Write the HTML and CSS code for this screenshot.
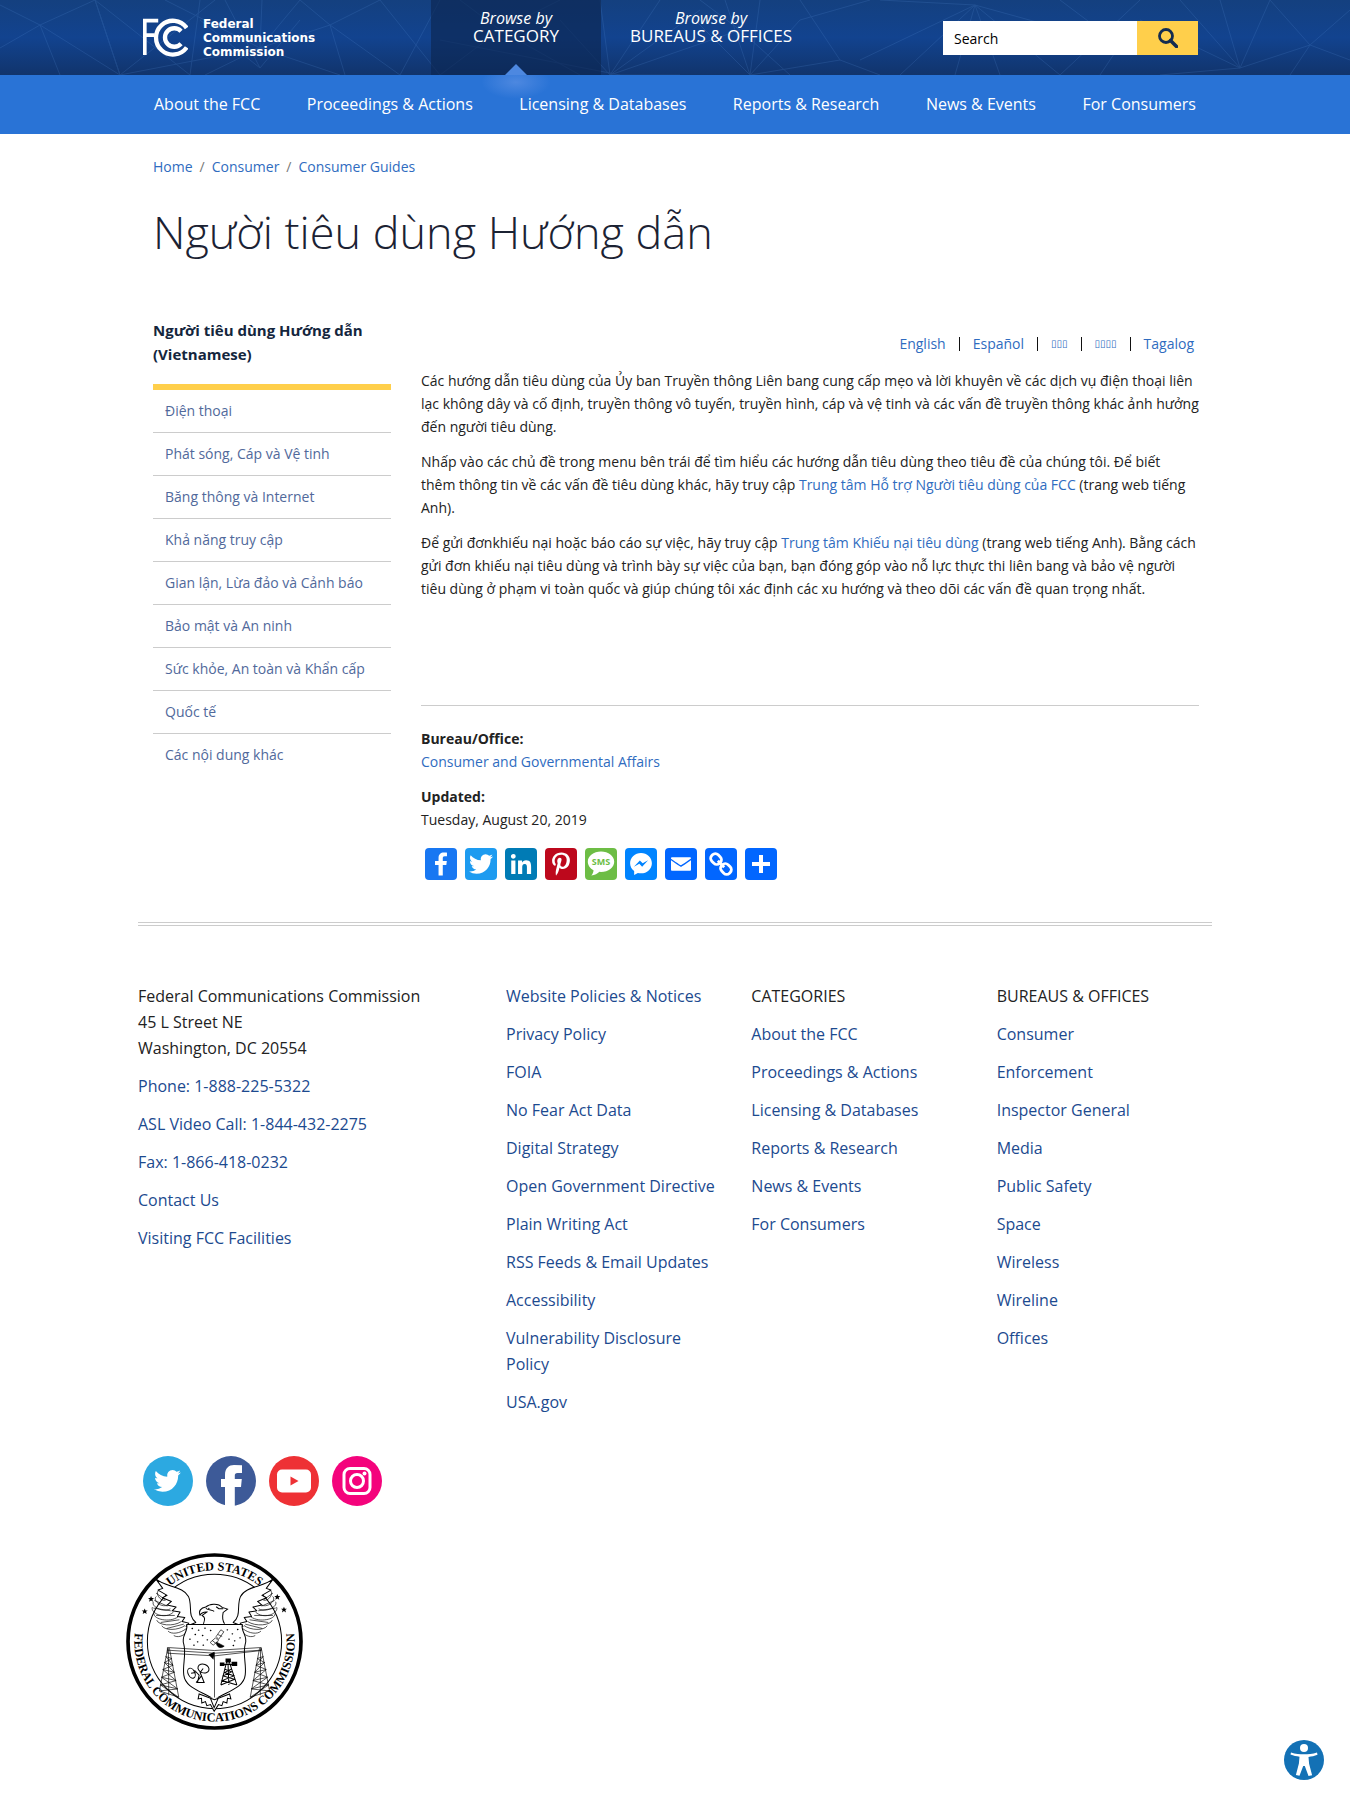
FILE: index.html
```html
<!DOCTYPE html>
<html lang="vi">
<head>
<meta charset="utf-8">
<meta name="viewport" content="width=device-width, initial-scale=1">
<title>Người tiêu dùng Hướng dẫn | Federal Communications Commission</title>
<link rel="stylesheet" href="styles.css">
</head>
<body>
<header class="site-header">
  <div class="masthead">
    <svg class="masthead-pattern" viewBox="0 0 1350 75" preserveAspectRatio="xMidYMid slice" aria-hidden="true">
      <g id="web" fill="none" stroke="#5b93dc" stroke-width="1">
        <path d="M0 5 40 25 95 0M0 48 40 25 60 75M40 25 120 75 95 0M120 75 95 0 190 75M120 75 215 0M120 75 260 48 340 75M190 75 200 0M260 48 165 0M260 48 262 0M260 48 300 0M260 48 330 25 400 75M260 48 205 75M330 25 300 0M330 25 380 0 440 75M330 25 345 75M260 68 200 20M260 68 225 0M260 68 300 20"/>
        <path d="M400 75 440 0M440 75 500 30 580 75M500 30 460 0M500 30 560 0M440 40 620 75M600 0 610 75 700 10M610 75 660 0M610 75 740 30M610 75 560 20M610 75 680 75M740 30 700 0M740 30 790 75"/>
      </g>
      <path fill="none" stroke="#5b93dc" d="M750 75 725 0M750 75 760 0M750 75 800 20 870 0M750 75 690 15M750 75 840 60 800 0M840 60 880 75M975 5 900 75M975 5 860 60M975 5 880 0M975 5 955 75M975 5 1000 75M975 5 1060 75M975 5 1120 45M1060 75 1140 0M1120 45 1060 0M1120 45 1100 75M1240 68 1180 0M1240 68 1140 20M1240 68 1220 0M1240 68 1270 0M1240 68 1310 45M1240 68 1160 75M1310 45 1270 0M1310 45 1350 10M1310 45 1350 60M1310 45 1290 75"/>
    </svg>
    <div class="masthead-inner">
      <a class="logo" href="#">
        <svg class="logo-mark" viewBox="38 56 136 116" aria-hidden="true">
          <path d="M43.500 167V63H84M46 107H73" fill="none" stroke="#fff" stroke-width="11"/>
          <path d="M170 85A51 51 0 1 0 170 144" fill="none" stroke="#fff" stroke-width="13"/>
          <path d="M153 95A28 28 0 1 0 153 133" fill="none" stroke="#fff" stroke-width="13"/>
        </svg>
        <span class="logo-text">Federal<br>Communications<br>Commission</span>
      </a>
      <nav class="tabs" aria-label="Browse">
        <a class="tab tab-category is-active" href="#"><em>Browse by</em><span>CATEGORY</span></a>
        <a class="tab tab-bureaus" href="#"><em>Browse by</em><span>BUREAUS &amp; OFFICES</span></a>
      </nav>
      <form class="search" role="search">
        <input type="text" value="Search" aria-label="Search">
        <button type="button" aria-label="Submit search">
          <svg viewBox="0 0 20 20" aria-hidden="true"><circle cx="8" cy="8" r="6.500" fill="none" stroke="#142c50" stroke-width="2.800"/><path d="m12.500 12.500 6 6" stroke="#142c50" stroke-width="3.600" stroke-linecap="round"/></svg>
        </button>
      </form>
    </div>
  </div>
  <nav class="main-nav" aria-label="Main">
    <ul>
      <li><a href="#">About the FCC</a></li>
      <li><a href="#">Proceedings &amp; Actions</a></li>
      <li><a href="#">Licensing &amp; Databases</a></li>
      <li><a href="#">Reports &amp; Research</a></li>
      <li><a href="#">News &amp; Events</a></li>
      <li><a href="#">For Consumers</a></li>
    </ul>
  </nav>
</header>

<div class="page">
  <ol class="breadcrumb">
    <li><a href="#">Home</a></li>
    <li><a href="#">Consumer</a></li>
    <li><a href="#">Consumer Guides</a></li>
  </ol>
  <h1>Người tiêu dùng Hướng dẫn</h1>
  <div class="columns">
    <aside class="sidebar">
      <h2>Người tiêu dùng Hướng dẫn (Vietnamese)</h2>
      <ul>
        <li><a href="#">Điện thoại</a></li>
        <li><a href="#">Phát sóng, Cáp và Vệ tinh</a></li>
        <li><a href="#">Băng thông và Internet</a></li>
        <li><a href="#">Khả năng truy cập</a></li>
        <li><a href="#">Gian lận, Lừa đảo và Cảnh báo</a></li>
        <li><a href="#">Bảo mật và An ninh</a></li>
        <li><a href="#">Sức khỏe, An toàn và Khẩn cấp</a></li>
        <li><a href="#">Quốc tế</a></li>
        <li><a href="#">Các nội dung khác</a></li>
      </ul>
    </aside>
    <main class="content">
      <ul class="languages">
        <li><a href="#">English</a></li>
        <li><a href="#">Español</a></li>
        <li><a class="boxed" href="#">▯▯▯</a></li>
        <li><a class="boxed" href="#">▯▯▯▯</a></li>
        <li><a href="#">Tagalog</a></li>
      </ul>
      <div class="body-text">
        <p>Các hướng dẫn tiêu dùng của Ủy ban Truyền thông Liên bang cung cấp mẹo và lời khuyên về các dịch vụ điện thoại liên lạc không dây và cố định, truyền thông vô tuyến, truyền hình, cáp và vệ tinh và các vấn đề truyền thông khác ảnh hưởng đến người tiêu dùng.</p>
        <p>Nhấp vào các chủ đề trong menu bên trái để tìm hiểu các hướng dẫn tiêu dùng theo tiêu đề của chúng tôi. Để biết<br>thêm thông tin về các vấn đề tiêu dùng khác, hãy truy cập <a href="#">Trung tâm Hỗ trợ Người tiêu dùng của FCC</a> (trang web tiếng Anh).</p>
        <p>Để gửi đơnkhiếu nại hoặc báo cáo sự việc, hãy truy cập <a href="#">Trung tâm Khiếu nại tiêu dùng</a> (trang web tiếng Anh). Bằng cách gửi đơn khiếu nại tiêu dùng và trình bày sự việc của bạn, bạn đóng góp vào nỗ lực thực thi liên bang và bảo vệ người tiêu dùng ở phạm vi toàn quốc và giúp chúng tôi xác định các xu hướng và theo dõi các vấn đề quan trọng nhất.</p>
      </div>
      <div class="meta">
        <p><strong>Bureau/Office:</strong><br><a href="#">Consumer and Governmental Affairs</a></p>
        <p><strong>Updated:</strong><br>Tuesday, August 20, 2019</p>
      </div>
      <div class="share">
        <a class="facebook" href="#" aria-label="Facebook"><svg viewBox="0 0 32 32"><path d="M17.780 27.500V17.008h3.522l.527-4.090h-4.050v-2.610c0-1.182.330-1.990 2.023-1.990h2.166V4.660c-.375-.050-1.660-.160-3.155-.160-3.123 0-5.260 1.905-5.260 5.405v3.016h-3.530v4.090h3.530V27.500z"/></svg></a>
        <a class="twitter" href="#" aria-label="Twitter"><svg viewBox="0 0 32 32"><path id="bird" d="M28 8.557a9.913 9.913 0 0 1-2.828.775 4.930 4.930 0 0 0 2.166-2.725 9.738 9.738 0 0 1-3.130 1.194 4.920 4.920 0 0 0-3.593-1.550 4.924 4.924 0 0 0-4.794 6.049c-4.090-.210-7.720-2.170-10.150-5.150a4.942 4.942 0 0 0-.665 2.477c0 1.710.870 3.214 2.190 4.100a4.968 4.968 0 0 1-2.230-.616v.060c0 2.390 1.700 4.380 3.952 4.830-.414.115-.850.174-1.297.174-.318 0-.626-.030-.928-.086a4.935 4.935 0 0 0 4.600 3.420 9.893 9.893 0 0 1-6.114 2.107c-.398 0-.790-.023-1.175-.068a13.953 13.953 0 0 0 7.550 2.213c9.056 0 14.010-7.507 14.010-14.013 0-.213-.005-.426-.015-.637.960-.695 1.795-1.560 2.455-2.550z"/></svg></a>
        <a class="linkedin" href="#" aria-label="LinkedIn"><svg viewBox="0 0 32 32"><path d="M6.227 12.610h4.190v13.480h-4.190V12.610zm2.095-6.700a2.430 2.430 0 0 1 0 4.860c-1.344 0-2.428-1.090-2.428-2.430s1.084-2.430 2.428-2.430m4.720 6.700h4.020v1.840h.058c.560-1.058 1.927-2.176 3.965-2.176 4.238 0 5.020 2.792 5.020 6.420v7.395h-4.183v-6.560c0-1.564-.030-3.574-2.178-3.574-2.180 0-2.514 1.700-2.514 3.460v6.668h-4.187V12.610z"/></svg></a>
        <a class="pinterest" href="#" aria-label="Pinterest"><svg viewBox="0 0 32 32"><path d="M16.539 4.500c-6.277 0-9.442 4.500-9.442 8.253 0 2.272.860 4.293 2.705 5.046.303.125.574.005.662-.330.061-.231.205-.816.270-1.060.088-.331.053-.447-.191-.736-.532-.627-.873-1.439-.873-2.591 0-3.338 2.498-6.327 6.505-6.327 3.548 0 5.497 2.168 5.497 5.062 0 3.810-1.686 7.025-4.188 7.025-1.382 0-2.416-1.142-2.085-2.545.397-1.674 1.166-3.480 1.166-4.689 0-1.081-.581-1.983-1.782-1.983-1.413 0-2.548 1.462-2.548 3.419 0 1.247.421 2.091.421 2.091l-1.699 7.199c-.505 2.137-.076 4.755-.039 5.019.021.158.223.196.314.077.130-.170 1.813-2.247 2.384-4.324.162-.587.929-3.631.929-3.631.460.876 1.801 1.646 3.227 1.646 4.247 0 7.128-3.871 7.128-9.053.003-3.918-3.317-7.568-8.361-7.568z"/></svg></a>
        <a class="sms" href="#" aria-label="SMS"><svg viewBox="0 0 32 32"><path d="M16 3.500C8.600 3.500 2.800 8 2.800 13.700c0 3.600 2.400 6.700 5.700 8.500 0 1.700-.600 3.500-2.200 5.300 3.500-.300 6.300-1.800 8.100-3.700l1.600.1c7.400 0 13.200-4.500 13.200-10.200S23.400 3.500 16 3.500z"/><text x="16" y="17" text-anchor="middle">SMS</text></svg></a>
        <a class="messenger" href="#" aria-label="Messenger"><svg viewBox="0 0 32 32"><path d="M16 5C9.986 5 5.110 9.560 5.110 15.182c0 3.200 1.580 6.054 4.046 7.920V27l3.716-2.060c.990.276 2.040.425 3.128.425 6.014 0 10.890-4.560 10.890-10.183S22.013 5 16 5zm1.147 13.655L14.330 15.730l-5.423 3 5.946-6.310 2.816 2.925 5.420-3-5.942 6.310z"/></svg></a>
        <a class="email" href="#" aria-label="Email"><svg viewBox="0 0 32 32"><path d="M26 21.250v-9s-9.100 6.350-9.984 6.680C15.144 18.616 6 12.250 6 12.250v9c0 1.250.266 1.500 1.500 1.500h17c1.266 0 1.500-.220 1.500-1.500zm-.015-10.765c0-.910-.265-1.235-1.485-1.235h-17c-1.255 0-1.500.390-1.500 1.300l.015.140s9.035 6.220 10 6.560c1.020-.395 9.985-6.700 9.985-6.700z"/></svg></a>
        <a class="copy" href="#" aria-label="Copy link"><svg viewBox="0 0 32 32"><g transform="rotate(45 16 16)" fill="none" stroke="#fff" stroke-width="2.800"><rect x="3.500" y="11.500" width="11" height="9" rx="4"/><rect x="17.500" y="11.500" width="11" height="9" rx="4"/><path d="M11.500 16h9"/></g></svg></a>
        <a class="more" href="#" aria-label="Share"><svg viewBox="0 0 32 32"><path d="M14 7h4v18h-4zM7 14h18v4H7z"/></svg></a>
      </div>
    </main>
  </div>
</div>

<footer class="site-footer">
  <div class="footer-columns">
    <div class="contact">
      <address>Federal Communications Commission<br>45 L Street NE<br>Washington, DC 20554</address>
      <ul>
        <li><a href="#">Phone: 1-888-225-5322</a></li>
        <li><a href="#">ASL Video Call: 1-844-432-2275</a></li>
        <li><a href="#">Fax: 1-866-418-0232</a></li>
        <li><a href="#">Contact Us</a></li>
        <li><a href="#">Visiting FCC Facilities</a></li>
      </ul>
    </div>
    <ul>
      <li><a href="#">Website Policies &amp; Notices</a></li>
      <li><a href="#">Privacy Policy</a></li>
      <li><a href="#">FOIA</a></li>
      <li><a href="#">No Fear Act Data</a></li>
      <li><a href="#">Digital Strategy</a></li>
      <li><a href="#">Open Government Directive</a></li>
      <li><a href="#">Plain Writing Act</a></li>
      <li><a href="#">RSS Feeds &amp; Email Updates</a></li>
      <li><a href="#">Accessibility</a></li>
      <li><a href="#">Vulnerability Disclosure Policy</a></li>
      <li><a href="#">USA.gov</a></li>
    </ul>
    <div>
      <h2>CATEGORIES</h2>
      <ul>
        <li><a href="#">About the FCC</a></li>
        <li><a href="#">Proceedings &amp; Actions</a></li>
        <li><a href="#">Licensing &amp; Databases</a></li>
        <li><a href="#">Reports &amp; Research</a></li>
        <li><a href="#">News &amp; Events</a></li>
        <li><a href="#">For Consumers</a></li>
      </ul>
    </div>
    <div>
      <h2>BUREAUS &amp; OFFICES</h2>
      <ul>
        <li><a href="#">Consumer</a></li>
        <li><a href="#">Enforcement</a></li>
        <li><a href="#">Inspector General</a></li>
        <li><a href="#">Media</a></li>
        <li><a href="#">Public Safety</a></li>
        <li><a href="#">Space</a></li>
        <li><a href="#">Wireless</a></li>
        <li><a href="#">Wireline</a></li>
        <li><a href="#">Offices</a></li>
      </ul>
    </div>
  </div>
  <div class="social">
    <a href="#" aria-label="Twitter"><svg viewBox="0 0 50 50"><circle cx="25" cy="25" r="25" fill="#2ca9e1"/><use href="#bird" transform="translate(6.500 7) scale(1.120)" fill="#fff"/></svg></a>
    <a href="#" aria-label="Facebook"><svg viewBox="0 0 50 50"><circle cx="25" cy="25" r="25" fill="#3d5a98"/><path fill="#fff" d="M19 50V31h-4v-8h4v-4c0-7 4-10 9-10l8 .3V17h-4.500c-2 0-2.700 1-2.700 2.600V23h7l-.8 8h-6.200v19z"/></svg></a>
    <a href="#" aria-label="YouTube"><svg viewBox="0 0 50 50"><circle cx="25" cy="25" r="25" fill="#ee3135"/><rect x="8" y="13.500" width="34" height="23" rx="5" fill="#fff"/><path d="M21.500 20.500v9l8-4.500z" fill="#ee3135"/></svg></a>
    <a href="#" aria-label="Instagram"><svg viewBox="0 0 50 50"><circle cx="25" cy="25" r="25" fill="#f4037c"/><rect x="12" y="12.500" width="26" height="25" rx="6" fill="none" stroke="#fff" stroke-width="3"/><circle cx="25" cy="25" r="6.500" fill="none" stroke="#fff" stroke-width="3"/><circle cx="32.500" cy="17.500" r="2" fill="#fff"/></svg></a>
  </div>
  <svg class="seal" viewBox="34 42 530 530" role="img" aria-label="Seal of the Federal Communications Commission">
    <defs>
      <path id="arc-top" d="M86 307A213 213 0 0 1 512 307"/>
      <path id="arc-bottom" d="M86 196A240 240 0 1 0 512 196"/>
      <path id="star" d="m0-9 2.600 6h6.400l-5 4 2 7-6-4-6 4 2-7-5-4h6.400z"/>
    </defs>
    <circle cx="299" cy="307" r="259" fill="#fff" stroke="#000" stroke-width="11"/>
    <circle cx="299" cy="307" r="201" fill="none" stroke="#000" stroke-width="3"/>
    <g class="seal-text">
      <text><textPath href="#arc-top" startOffset="50%" text-anchor="middle">UNITED STATES</textPath></text>
      <text><textPath href="#arc-bottom" startOffset="50%" text-anchor="middle">FEDERAL COMMUNICATIONS COMMISSION</textPath></text>
    </g>
    <use href="#star" x="109" y="180"/><use href="#star" x="90" y="217"/><use href="#star" x="487" y="174"/><use href="#star" x="507" y="212"/>
    <g id="wing" fill="#fff" stroke="#000" stroke-width="3" stroke-linejoin="round">
      <path d="M122 118C150 145 205 140 221 172C234 202 217 228 243 250L214 262L222 252L202 247L210 235L188 232L196 219L172 215L184 204L157 198L170 187L143 176L157 169L130 153L144 148Z"/>
      <path fill="none" stroke-width="2" d="M130 155C122 170 142 188 153 183M125 172C112 182 138 207 158 198M116 188C108 202 145 222 167 209M113 204C106 222 150 243 176 219M118 224C116 240 165 252 190 233M126 243C130 258 175 264 200 247M141 260C151 275 190 274 211 259M160 276C170 286 195 284 215 268M177 289C188 296 205 292 216 278M124 162 150 181M119 184 158 201M116 207 168 215M124 229 180 229M138 250 194 242M156 268 207 255"/>
    </g>
    <use href="#wing" transform="matrix(-1 0 0 1 598 0)"/>
    <path d="M266 254C271 239 271 234 262 229L276 219C266 218 256 224 256 229C250 216 258 206 273 204C282 195 309 190 322 205L338 210L325 220C323 230 320 239 329 254M273 208C282 214 292 212 298 217M304 203 312 209 325 209" fill="#fff" stroke="#000" stroke-width="3"/>
    <circle cx="282" cy="208" r="2"/>
    <path d="M216 256H382C378 280 400 290 391 315C383 344 395 377 391 407C387 444 345 453 299 481C253 453 211 444 207 407C203 377 215 344 207 315C198 290 220 280 216 256Z" fill="#fff" stroke="#000" stroke-width="3"/>
    <path d="M232 268h1M251 273h1M270 267h1M241 286h1M225 300h1M263 289h1M277 302h1M248 308h1M287 274h1M337 272h1M352 284h1M368 271h1M342 300h1M359 305h1M375 296h1M237 318h1M265 318h1M355 319h1" stroke="#000" stroke-width="4" stroke-linecap="round"/>
    <path d="M158 325 299 334 439 325V334L299 350 158 342ZM158 333 299 342 439 333M299 340V480" fill="none" stroke="#000" stroke-width="2"/>
    <path d="M281 346 299 338 296 362Z"/>
    <g stroke="#000" stroke-width="2" fill="#fff"><path d="m286 310 16-14 9 9-16 13zM304 292 318 272 327 278 311 301zM292 304 305 314M309 286 322 292"/><path d="M305 309C304 323 316 330 328 321Z" fill="#000"/></g>
    <g id="mast" fill="none" stroke="#000" stroke-width="2">
      <path d="M159 327 134 455M164 327 192 474M161 327 162 468M153 352 171 358M149 370 175 378M144 391 179 399M140 414 184 424M137 437 189 449M134 455 192 474M171 358 149 370 179 399 140 414 189 449 134 455M153 352 175 378 144 391 184 424 137 437 192 474"/>
    </g>
    <use href="#mast" transform="matrix(-1 0 0 1 598 0)"/>
    <g fill="none" stroke="#000" stroke-width="3"><ellipse cx="230" cy="402" rx="10" ry="16" transform="rotate(-25 230 402)"/><ellipse cx="266" cy="388" rx="13" ry="17" transform="rotate(-70 266 388)"/><path d="M239 393 253 408 248 430H268L256 400 265 388M244 430 260 410M229 402 242 400M337 361 318 437M341 361 366 437M339 361 342 437M330 390 350 398 325 410 359 420 318 437M350 389 329 400 357 410 322 424 366 437M321 376H359"/></g>
    <path d="M315 370h14v10h-14zM350 368h17v12h-17zM332 358h16v11h-16z"/>
    <path d="M253 464 250 479 260 477 261 491 272 487 276 499 287 496 298 516 311 496 321 499 325 487 336 491 338 477 348 479 344 464 299 481ZM286 475 298 505 311 475" fill="#fff" stroke="#000" stroke-width="3"/>
  </svg>
</footer>

<button class="a11y" type="button" aria-label="Accessibility options">
  <svg viewBox="0 0 40 40" aria-hidden="true"><circle cx="20" cy="20" r="20" fill="#1371b5"/><circle cx="20" cy="8" r="4" fill="#fff"/><path fill="#fff" d="M7 12.500c4.500 1.500 9 1.800 13 1.800s8.500-.3 13-1.800l.5 2.200c-3 1.200-6 1.800-9 2.200l.6 6.800 3 11.500-3.600.8L20.800 26h-1.600l-3.700 9.800-3.600-.8 3-11.500.6-6.800c-3-.4-6-1-9-2.200z"/></svg>
</button>
</body>
</html>
```

FILE: styles.css
```css
* { box-sizing: border-box; }

body {
  margin: 0;
  background: #fff;
  color: #222;
  font: 14px/22px "Open Sans", "Noto Sans", sans-serif;
}

a { color: #2f6cc0; text-decoration: none; }
ul, ol { margin: 0; padding: 0; list-style: none; }
svg { display: block; }

/* Header */
.masthead {
  position: relative;
  background: linear-gradient(#14407f, #12438f 50%, #11346c);
}
.masthead-pattern {
  position: absolute;
  inset: 0;
  width: 100%;
  height: 100%;
  opacity: 0.18;
}
.masthead-inner {
  position: relative;
  display: flex;
  max-width: 1076px;
  min-height: 75px;
  margin: 0 auto;
  padding: 0 15px 0 6px;
}
.logo {
  display: flex;
  flex: 0 0 288px;
  align-items: center;
  gap: 15px;
  color: #fff;
}
.logo-mark { width: 45px; height: 39px; }
.logo-text { font: bold 12px/14px "DejaVu Sans", sans-serif; }
.tabs { display: flex; }
.tab {
  position: relative;
  padding-top: 10px;
  color: #fff;
  font-size: 17px;
  line-height: 17px;
  text-align: center;
}
.tab em, .tab span { display: block; }
.tab em { font-size: 16px; }
.tab-category { width: 170px; }
.tab-bureaus { width: 220px; }
.tab.is-active { background: rgba(12, 38, 82, 0.65); }
.tab.is-active::before {
  content: "";
  position: absolute;
  z-index: 1;
  top: 75px;
  left: 50%;
  width: 70px;
  height: 24px;
  margin-left: -35px;
  background: radial-gradient(ellipse at 50% 30%, #4d88e0, rgba(77, 136, 224, 0) 70%);
}
.tab.is-active::after {
  content: "";
  position: absolute;
  bottom: 0;
  left: 50%;
  margin-left: -11px;
  border: 11px solid transparent;
  border-top: 0;
  border-bottom-color: #4d88e0;
}
.search {
  display: flex;
  width: 255px;
  height: 34px;
  margin: 21px 0 0 auto;
}
.search input {
  flex: 1;
  min-width: 0;
  padding: 2px 11px 0;
  border: 0;
  background: #fff;
  color: #000;
  font: inherit;
}
.search button {
  width: 61px;
  padding: 0;
  border: 0;
  background: #ffcf4b;
}
.search svg { width: 20px; height: 20px; margin: 0 auto; }
.main-nav { background: #2973d6; }
.main-nav ul {
  display: flex;
  justify-content: space-between;
  max-width: 1042px;
  margin: 0 auto;
  padding: 17px 0 18px;
}
.main-nav a { color: #fff; font-size: 16px; line-height: 24px; }

/* Page body */
.page {
  max-width: 1074px;
  margin: 0 auto;
  padding: 22px 13px 42px 15px;
  border-bottom: 4px double #ccc;
}
.breadcrumb { display: flex; }
.breadcrumb li + li::before { content: "/"; padding: 0 7px; color: #777; }
h1 {
  margin: 24px 0 0;
  color: #1b2233;
  font-size: 45px;
  font-weight: 300;
  line-height: 60px;
}
.columns { display: flex; gap: 30px; margin-top: 56px; }
.sidebar { flex: 0 0 238px; }
.sidebar h2 {
  margin: 0;
  padding-bottom: 18px;
  border-bottom: 6px solid #ffcf4b;
  color: #14263d;
  font-size: 15px;
  line-height: 24px;
}
.sidebar li + li { border-top: 1px solid #ccc; }
.sidebar a { display: block; padding: 10px 12px; color: #51699b; }
.content { flex: 1; min-width: 0; }
.languages {
  display: flex;
  justify-content: flex-end;
  margin: 15px 5px 0 0;
}
.languages li { display: flex; align-items: center; height: 22px; }
.languages li + li::before {
  content: "";
  width: 1px;
  height: 14px;
  margin: 0 13px;
  background: #111;
}
.languages .boxed { font-family: "DejaVu Sans", sans-serif; font-size: 10px; }
.body-text { min-height: 351px; padding-top: 14px; border-bottom: 1px solid #ccc; }
.body-text p, .meta p { margin: 0 0 12px; line-height: 23px; }
.meta { padding-top: 21px; }
.share { display: flex; flex-wrap: wrap; gap: 8px; padding: 5px 4px 0; }
.share a { width: 32px; height: 32px; border-radius: 4px; }
.share path { fill: #fff; }
.share text { fill: #6dbd45; font: bold 9px "Open Sans", sans-serif; }
.facebook { background: #1877f2; }
.twitter { background: #1d9bf0; }
.linkedin { background: #007bb5; }
.pinterest { background: #bd081c; }
.sms { background: #6dbd45; }
.messenger { background: #0084ff; }
.email, .copy, .more { background: #0166ff; }

/* Footer */
.site-footer {
  max-width: 1104px;
  margin: 0 auto;
  padding: 57px 0 80px;
  color: #222;
  font-size: 16px;
  line-height: 26px;
}
.site-footer a { color: #1c4a8f; }
.footer-columns { display: grid; grid-template-columns: 3fr 2fr 2fr 2fr; }
.footer-columns > * { padding: 0 15px; }
.site-footer h2 { margin: 0 0 12px; font: inherit; }
.site-footer address { margin-bottom: 12px; font-style: normal; }
.site-footer li { margin-bottom: 12px; }
.social { display: flex; gap: 13px; margin: 29px 0 0 20px; }
.social svg { width: 50px; height: 50px; }
.seal { width: 177px; height: 177px; margin: 47px 0 0 3px; }
.seal-text { font: bold 37px "Liberation Serif", serif; }

/* Floating accessibility button */
.a11y {
  position: fixed;
  right: 26px;
  bottom: 31px;
  width: 40px;
  height: 40px;
  padding: 0;
  border: 0;
  border-radius: 50%;
  background: none;
}

@media (max-width: 900px) {
  .masthead-inner, .main-nav ul, .columns { flex-wrap: wrap; }
  .main-nav ul { gap: 0 24px; padding: 18px 15px; }
  .sidebar { flex-basis: 100%; }
  .content { flex-basis: 100%; }
  .footer-columns { grid-template-columns: 1fr 1fr; }
}
```
